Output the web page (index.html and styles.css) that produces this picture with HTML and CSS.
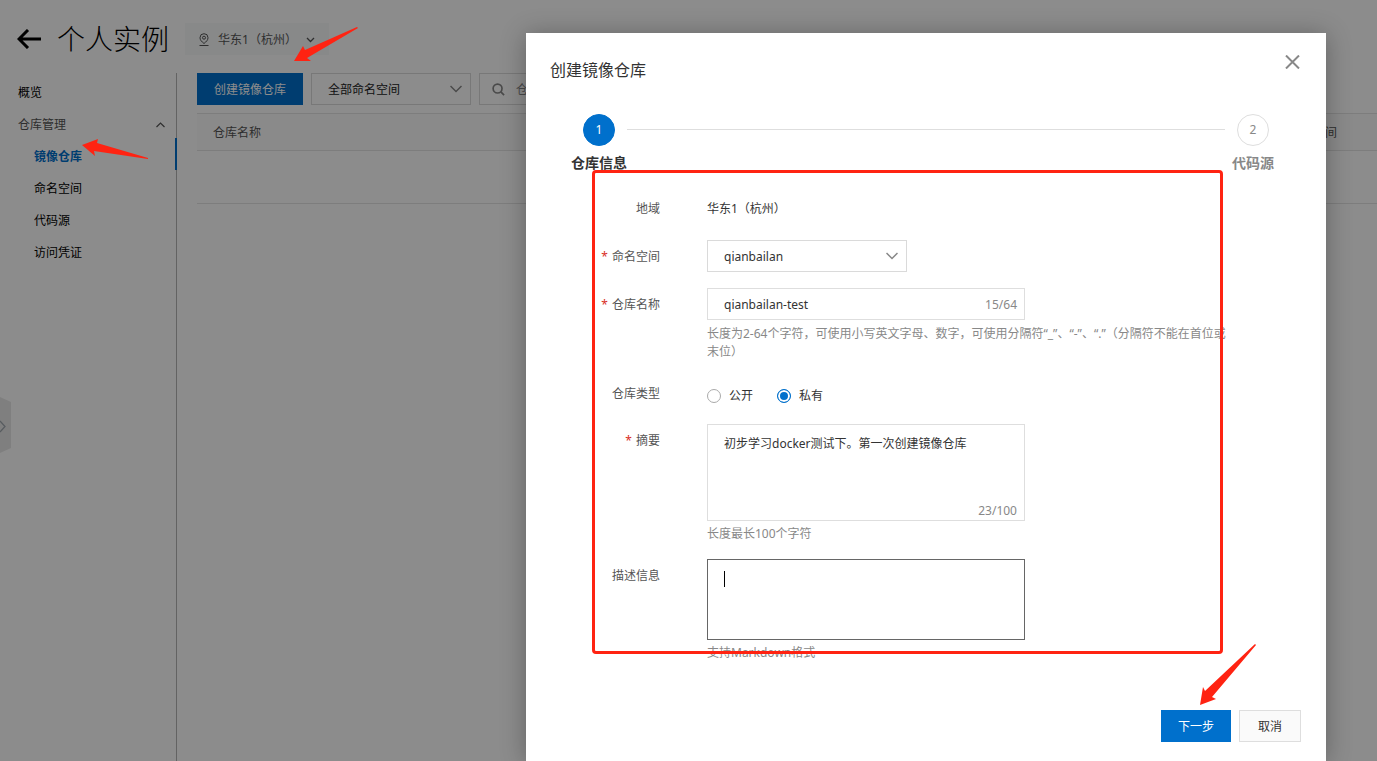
FILE: index.html
```html
<!DOCTYPE html>
<html lang="zh-CN">
<head>
<meta charset="utf-8">
<title>个人实例</title>
<link rel="stylesheet" href="styles.css">
</head>
<body>
<div class="page">
  <header class="page-header">
    <a class="back" href="#" aria-label="返回">
      <svg width="24" height="20" viewBox="0 0 24 20" fill="none" stroke="currentColor" stroke-width="3"><path d="M24 10H2M11 1L2 10l9 9"/></svg>
    </a>
    <h1 class="page-title">个人实例</h1>
    <button class="region" type="button">
      <svg width="12" height="14" viewBox="0 0 12 14" fill="none" stroke="currentColor"><path d="M6 10.500C3.500 8.500 2 7 2 4.700a4 4 0 0 1 8 0C10 7 8.500 8.500 6 10.500zM1.500 12.500h9"/><circle cx="6" cy="4.700" r="1.500"/></svg>
      <span>华东1（杭州）</span>
      <svg class="region-caret" width="9" height="6" viewBox="0 0 9 6" fill="none" stroke="currentColor" stroke-width="1.300"><path d="M1 1l3.500 3.500L8 1"/></svg>
    </button>
  </header>
  <div class="page-body">
    <nav class="sidebar">
      <a class="nav-item" href="#">概览</a>
      <button class="nav-item nav-group" type="button">仓库管理
        <svg width="9" height="6" viewBox="0 0 9 6" fill="none" stroke="currentColor" stroke-width="1.200"><path d="M.500 5l4-4 4 4"/></svg>
      </button>
      <a class="nav-item nav-sub nav-active" href="#">镜像仓库</a>
      <a class="nav-item nav-sub" href="#">命名空间</a>
      <a class="nav-item nav-sub" href="#">代码源</a>
      <a class="nav-item nav-sub" href="#">访问凭证</a>
    </nav>
    <main class="main">
      <div class="toolbar">
        <button class="btn btn-primary" type="button">创建镜像仓库</button>
        <div class="select select-filter">
          <select aria-label="命名空间筛选"><option>全部命名空间</option></select>
          <svg class="select-caret" width="12" height="8" viewBox="0 0 12 8" fill="none" stroke="currentColor" stroke-width="1.500"><path d="M.500 1L6 6.500 11.500 1"/></svg>
        </div>
        <div class="search">
          <svg width="13" height="13" viewBox="0 0 14 14" fill="none" stroke="currentColor" stroke-width="1.800"><circle cx="6" cy="6" r="4.800"/><path d="M9.500 9.500L13 13"/></svg>
          <input type="text" aria-label="搜索" placeholder="仓库名称">
        </div>
      </div>
      <table class="table">
        <thead><tr><th>仓库名称</th><th class="col-time">创建时间</th></tr></thead>
        <tbody><tr><td colspan="2"></td></tr></tbody>
      </table>
    </main>
  </div>
  <button class="handle" type="button" aria-label="展开">
    <svg width="11" height="56" viewBox="0 0 11 56"><path class="handle-bg" d="M0 0l11 5v46L0 56z"/><path d="M0 24l5 5.500L0 35" fill="none" stroke="currentColor" stroke-width="1.300"/></svg>
  </button>
</div>

<div class="mask">
  <section class="dialog" role="dialog" aria-labelledby="dialog-title">
    <header class="dialog-header">
      <h2 class="dialog-title" id="dialog-title">创建镜像仓库</h2>
      <button class="close" type="button" aria-label="关闭">
        <svg width="15" height="14" viewBox="0 0 15 14" fill="none" stroke="currentColor" stroke-width="2"><path d="M1 .500l13 13M14 .500l-13 13"/></svg>
      </button>
    </header>
    <ol class="steps">
      <li class="step step-current"><span class="step-dot">1</span><span class="step-label">仓库信息</span></li>
      <li class="step-line" aria-hidden="true"></li>
      <li class="step"><span class="step-dot">2</span><span class="step-label">代码源</span></li>
    </ol>
    <form class="form">
      <span class="label">地域</span>
      <div class="field static">华东1（杭州）</div>

      <label class="label required" for="ns">命名空间</label>
      <div class="field">
        <div class="select select-ns">
          <select id="ns"><option>qianbailan</option></select>
          <svg class="select-caret" width="12" height="8" viewBox="0 0 12 8" fill="none" stroke="currentColor" stroke-width="1.500"><path d="M.500 1L6 6.500 11.500 1"/></svg>
        </div>
      </div>

      <label class="label required" for="repo">仓库名称</label>
      <div class="field">
        <div class="box box-line">
          <input id="repo" type="text" value="qianbailan-test">
          <span class="count">15/64</span>
        </div>
        <p class="hint">长度为2-64个字符，可使用小写英文字母、数字，可使用分隔符“_”、“-”、“.”（分隔符不能在首位或末位）</p>
      </div>

      <span class="label">仓库类型</span>
      <div class="field radios">
        <label class="radio"><input type="radio" name="type">公开</label>
        <label class="radio"><input type="radio" name="type" checked>私有</label>
      </div>

      <label class="label required" for="summary">摘要</label>
      <div class="field">
        <div class="box box-area">
          <textarea id="summary" rows="3">初步学习docker测试下。第一次创建镜像仓库</textarea>
          <span class="count">23/100</span>
        </div>
        <p class="hint">长度最长100个字符</p>
      </div>

      <label class="label" for="desc">描述信息</label>
      <div class="field">
        <div class="box box-area box-focus">
          <textarea id="desc" rows="3"></textarea>
        </div>
        <p class="hint">支持Markdown格式</p>
      </div>
      <div class="frame" aria-hidden="true"></div>
    </form>
    <footer class="dialog-footer">
      <button class="btn btn-primary" type="button">下一步</button>
      <button class="btn btn-normal" type="button">取消</button>
      <svg class="arrow arrow-next" width="57" height="62" viewBox="0 0 57 62"><path d="M0 61L3 43l2 4L55 0l1 1-44 52 4 2z"/></svg>
    </footer>
  </section>
</div>

<svg class="arrow arrow-create" width="65" height="35" viewBox="0 0 65 35"><path d="M0 34l9-15 2 4L63 0l1 1-51 30 4 3z"/></svg>
<svg class="arrow arrow-nav" width="67" height="21" viewBox="0 0 67 21"><path d="M0 6l16-6-1 4 51 15v1l-54-8 1 5z"/></svg>
</body>
</html>
```

FILE: styles.css
```css
* {
  box-sizing: border-box;
}

body {
  margin: 0;
  height: 100vh;
  overflow: hidden;
  position: relative;
  background: #fff;
  color: #333;
  font: 12px/18px "Noto Sans", "Noto Sans CJK SC", sans-serif;
  text-spacing-trim: space-all;
}

button,
input,
select,
textarea {
  font: inherit;
  color: inherit;
  margin: 0;
}

a {
  color: inherit;
  text-decoration: none;
}

h1,
h2,
p,
ol {
  margin: 0;
  padding: 0;
}

/* Page */

.page {
  position: relative;
  display: flex;
  flex-direction: column;
  height: 100%;
}

.page-header {
  display: flex;
  align-items: center;
  gap: 16px;
  padding: 18px 17px 13px;
}

.back {
  display: flex;
  color: #000;
}

.page-title {
  font-size: 28px;
  line-height: 42px;
  font-weight: 300;
  color: #000;
}

.region {
  display: flex;
  align-items: center;
  gap: 8px;
  padding: 8px 14px 6px 13px;
  border: 0;
  background: #f7f9fa;
  color: #555;
}

.region-caret {
  margin-left: 1px;
}

.page-body {
  flex: 1;
  display: flex;
  gap: 20px;
}

.sidebar {
  width: 177px;
  padding-top: 1px;
  border-right: 1px solid #b4b4b4;
}

.nav-item {
  display: block;
  padding: 6px 11px 0 18px;
  line-height: 26px;
  color: #000;
}

.nav-group {
  display: flex;
  align-items: center;
  justify-content: space-between;
  width: 100%;
  border: 0;
  background: none;
  color: #555;
}

.nav-sub {
  padding-left: 34px;
}

.nav-active {
  margin-right: -1px;
  border-right: 2px solid #0070cc;
  color: #0070cc;
  font-weight: 600;
}

.main {
  flex: 1;
}

.toolbar {
  display: flex;
  gap: 8px;
}

.btn {
  padding: 7px 16px 5px;
  border: 1px solid #0070cc;
  line-height: 18px;
}

.btn-primary {
  background: #0070cc;
  color: #fff;
}

.btn-normal {
  padding: 7px 18px 5px;
  border-color: #dedede;
  background: #fafafa;
}

.select {
  position: relative;
}

.select select {
  display: block;
  width: 100%;
  height: 32px;
  padding: 2px 16px 0;
  border: 1px solid #dadada;
  border-radius: 0;
  appearance: none;
  background: #fff;
}

.select-caret {
  position: absolute;
  top: 12px;
  right: 9px;
  color: #888;
  pointer-events: none;
}

.select-filter {
  width: 160px;
  color: #222;
}

.select-ns {
  width: 200px;
}

.search {
  display: flex;
  align-items: center;
  gap: 11px;
  width: 300px;
  padding: 0 12px;
  border: 1px solid #dadada;
  color: #888;
}

.search input {
  flex: 1;
  min-width: 0;
  border: 0;
  padding: 2px 0 0;
  outline: 0;
}

.search input::placeholder {
  color: #888;
}

.table {
  width: 100%;
  margin-top: 8px;
  border-collapse: collapse;
}

.table th {
  padding: 10px 16px 8px;
  border: solid #e3e3e3;
  border-width: 1px 0;
  background: #fbfbfb;
  color: #555;
  font-weight: 400;
  text-align: left;
}

.table .col-time {
  width: 104px;
}

.table td {
  padding: 26px 16px;
  border-bottom: 1px solid #e3e3e3;
}

.handle {
  position: absolute;
  top: 397px;
  left: 0;
  display: flex;
  padding: 0;
  border: 0;
  background: none;
  color: #a0a8b0;
}

.handle-bg {
  fill: #e8e8e8;
}

/* Dialog */

.mask {
  position: absolute;
  inset: 0;
  display: flex;
  justify-content: flex-end;
  padding: 33px 51px 0;
  background: rgba(0, 0, 0, 0.45);
}

.dialog {
  width: 800px;
  padding: 24px;
  background: #fff;
  box-shadow: 0 2px 24px rgba(0, 0, 0, 0.3);
}

.dialog-header {
  display: flex;
  justify-content: space-between;
  align-items: flex-start;
}

.dialog-title {
  font-size: 16px;
  line-height: 26px;
  font-weight: 400;
}

.close {
  display: flex;
  padding: 0;
  margin: -2px 2px 0 0;
  border: 0;
  background: none;
  color: #888;
}

.steps {
  display: flex;
  align-items: flex-start;
  gap: 12px;
  padding: 31px 33px 0;
  list-style: none;
}

.step {
  display: flex;
  flex-direction: column;
  align-items: center;
  gap: 8px;
  width: 32px;
  color: #888;
}

.step-dot {
  width: 32px;
  border: 1px solid #dedede;
  border-radius: 50%;
  line-height: 30px;
  text-align: center;
}

.step-label {
  font-size: 14px;
  line-height: 18px;
  font-weight: 700;
  white-space: nowrap;
}

.step-current {
  color: #333;
}

.step-current .step-dot {
  border-color: #0070cc;
  background: #0070cc;
  color: #fff;
}

.step-line {
  flex: 1;
  margin-top: 15px;
  border-top: 1px solid #dedede;
}

.form {
  position: relative;
  display: grid;
  grid-template-columns: 110px 1fr;
  gap: 16px 47px;
  padding: 20px 72px 0 0;
}

.label,
.static {
  padding-top: 2px;
  line-height: 30px;
}

.label {
  text-align: right;
  color: #555;
}

.required::before {
  content: "*";
  margin-right: 4px;
  color: #d93026;
}

.box {
  display: flex;
  width: 318px;
  border: 1px solid #dedede;
}

.box input,
.box textarea {
  flex: 1;
  min-width: 0;
  padding: 7px 16px 5px;
  border: 0;
  outline: 0;
  background: none;
  resize: none;
  line-height: 18px;
}

.box-area {
  position: relative;
  flex-direction: column;
}

.box-area textarea {
  flex: none;
  padding: 10px 16px 13px;
}

.count {
  padding: 0 7px;
  color: #888;
  line-height: 30px;
}

.box-line .count {
  padding-top: 2px;
  line-height: 28px;
}

.box-area .count {
  line-height: 18px;
  text-align: right;
}

.box-focus {
  border-color: #666;
}

.box-focus::before {
  content: "";
  position: absolute;
  top: 11px;
  left: 16px;
  height: 16px;
  border-left: 1px solid #000;
}

.box-focus textarea {
  padding-bottom: 15px;
}

.hint {
  margin-top: 4px;
  color: #888;
}

.box-line + .hint {
  margin-top: 5px;
}

.radios {
  display: flex;
  align-items: center;
  gap: 24px;
  height: 31px;
  padding-top: 7px;
}

.radio {
  display: flex;
  align-items: center;
  gap: 8px;
}

.radio input {
  width: 14px;
  height: 14px;
  border: 1px solid #aaa;
  border-radius: 50%;
  appearance: none;
}

.radio input:checked {
  border-color: #0070cc;
  background: #0070cc;
  box-shadow: inset 0 0 0 2px #fff;
}

.radios + .label,
.radios .label {
  padding-top: 2px;
}

.form > .label {
  height: 31px;
}

.dialog-footer {
  position: relative;
  display: flex;
  justify-content: flex-end;
  gap: 8px;
  padding: 48px 1px 0 0;
}

/* Annotations */

.frame {
  position: absolute;
  top: -2px;
  right: 79px;
  bottom: 8px;
  left: 42px;
  border: 3px solid #ff2312;
  border-radius: 4px;
  pointer-events: none;
}

.arrow {
  position: absolute;
  fill: #ff2312;
  pointer-events: none;
}

.arrow-create {
  top: 27px;
  left: 294px;
}

.arrow-nav {
  top: 139px;
  left: 82px;
}

.arrow-next {
  top: -18px;
  right: 45px;
}
```
